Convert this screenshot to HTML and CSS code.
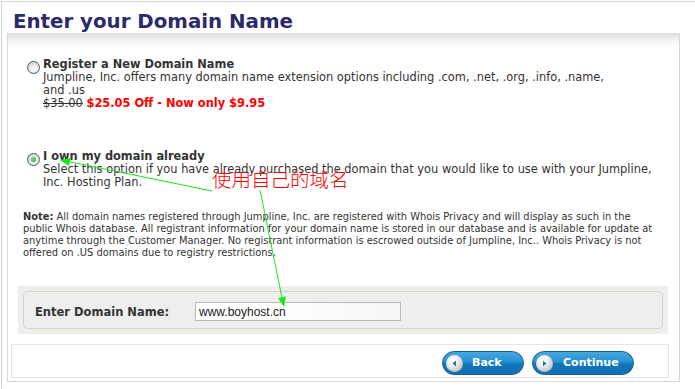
FILE: index.html
```html
<!DOCTYPE html>
<html>
<head>
<meta charset="utf-8">
<link rel="stylesheet" href="styles.css">
</head>
<body>
<div class="frame">
  <h1 class="title">Enter your Domain Name</h1>
  <div class="panel">
    <div class="option opt-new">
      <span class="radio"></span>
      <div class="opt-text">
        <div class="opt-title">Register a New Domain Name</div>
        <div>Jumpline, Inc. offers many domain name extension options including .com, .net, .org, .info, .name,<br>and .us</div>
        <div><s>$35.00</s> <b class="red">$25.05 Off - Now only $9.95</b></div>
      </div>
    </div>
    <div class="option opt-own">
      <span class="radio checked"></span>
      <div class="opt-text">
        <div class="opt-title">I own my domain already</div>
        <div>Select this option if you have already purchased the domain that you would like to use with your Jumpline,<br>Inc. Hosting Plan.</div>
      </div>
    </div>
    <p class="note"><b>Note:</b> All domain names registered through Jumpline, Inc. are registered with Whois Privacy and will display as such in the<br>public Whois database. All registrant information for your domain name is stored in our database and is available for update at<br>anytime through the Customer Manager. No registrant information is escrowed outside of Jumpline, Inc.. Whois Privacy is not<br>offered on .US domains due to registry restrictions.</p>
    <div class="domain-box">
      <div class="domain-inner">
        <label class="domain-label">Enter Domain Name:</label>
        <div class="domain-input">www.boyhost.cn</div>
      </div>
    </div>
    <div class="footer">
      <span class="btn btn-back"><span class="btn-icon"><svg width="9" height="9" viewBox="0 0 9 9"><path d="M6 1.5 L2.5 4.5 L6 7.5 Z" fill="#1f78b8"/></svg></span>Back</span>
      <span class="btn btn-continue"><span class="btn-icon"><svg width="9" height="9" viewBox="0 0 9 9"><path d="M3 1.5 L6.5 4.5 L3 7.5 Z" fill="#1f78b8"/></svg></span>Continue</span>
    </div>
  </div>
</div>
<div class="annot-text">使用自己的域名</div>
<svg class="annot" width="695" height="389" viewBox="0 0 695 389">
  <line x1="212" y1="191" x2="66" y2="161" stroke="#19e619" stroke-width="1"/>
  <polygon points="60,160 70.6,158.1 69,165.9" fill="#19e619"/>
  <line x1="260" y1="190" x2="282" y2="298" stroke="#19e619" stroke-width="1"/>
  <polygon points="284,307 285.9,296.4 278.1,298" fill="#19e619"/>
</svg>
</body>
</html>
```
FILE: styles.css
```css
html, body {
  margin: 0;
  padding: 0;
  background: #fff;
}
body {
  position: relative;
  width: 695px;
  height: 389px;
  overflow: hidden;
  font-family: "DejaVu Sans", Verdana, sans-serif;
  color: #333;
}
.frame {
  margin-top: 1px;
  margin-left: 1px;
  border-top: 1px solid #d4d4d4;
  border-left: 1px solid #d4d4d4;
  height: 400px;
}
.title {
  margin: 0;
  padding: 8px 0 0 11px;
  height: 23px;
  font-size: 19.8px;
  line-height: 24px;
  font-weight: bold;
  color: #2b2a6b;
}
.panel {
  margin-left: 5px;
  width: 671px;
  border-left: 1px solid #d8d8d8;
  border-right: 1px solid #d8d8d8;
  border-bottom: 1px solid #d8d8d8;
  background: linear-gradient(#dcdcdc 0px, #f4f4f4 8px, #fff 16px);
  padding-top: 25px;
  padding-bottom: 3px;
}
.option {
  display: flex;
  align-items: flex-start;
  padding-left: 19px;
  font-size: 11.4px;
  line-height: 13px;
}
.opt-own {
  margin-top: 40px;
}
.radio {
  width: 11px;
  height: 11px;
  border: 1px solid #3a5a80;
  border-radius: 50%;
  background: radial-gradient(circle at 60% 65%, #ffffff 0px, #f2f2ee 3px, #d6d6ce 7px);
  margin-top: 3px;
  margin-right: 3px;
  position: relative;
  flex: none;
}
.radio.checked::after {
  content: "";
  position: absolute;
  left: 3px;
  top: 3px;
  width: 5px;
  height: 5px;
  border-radius: 50%;
  background: radial-gradient(circle at 40% 40%, #7de07d, #21a121);
}
.opt-title {
  font-weight: bold;
}
.red {
  color: #ff0000;
}
s {
  color: #333;
}
.note {
  margin: 22px 0 0 15px;
  font-size: 9.9px;
  line-height: 12px;
}
.note b {
  font-weight: bold;
}
.domain-box {
  margin: 27px 0 0 10px;
  width: 640px;
  padding: 5px;
  background: #eeeeee;
}
.domain-inner {
  display: flex;
  align-items: center;
  height: 36px;
  border: 1px solid #d4d4c2;
  border-radius: 5px;
  padding: 0 11px;
  box-sizing: content-box;
}
.domain-label {
  width: 160px;
  font-size: 11.5px;
  font-weight: bold;
  color: #333;
  padding-top: 4px;
}
.domain-input {
  width: 201px;
  height: 17px;
  border: 1px solid #b9b9b9;
  margin-top: 3px;
  background: linear-gradient(90deg, #ffffff 40%, #f6f6f6);
  font-family: "Liberation Sans", Arial, sans-serif;
  font-size: 12px;
  line-height: 18px;
  padding-left: 3px;
  color: #222;
}
.footer {
  margin: 10px 10px 0 3px;
  height: 32px;
  border: 1px solid #e4e4e4;
  display: flex;
  justify-content: flex-end;
  align-items: flex-start;
  gap: 8px;
  padding-right: 34px;
}
.btn {
  margin-top: 6px;
  height: 22px;
  border: 1px solid #1b5e92;
  border-radius: 12px;
  background: linear-gradient(#45a8e0 0%, #2690d2 45%, #0f74b8 55%, #1172b3 100%);
  color: #fff;
  font-size: 11px;
  font-weight: bold;
  line-height: 20px;
  display: flex;
  align-items: center;
  box-sizing: content-box;
}
.btn-back {
  width: 80px;
}
.btn-continue {
  width: 100px;
}
.btn-icon {
  width: 17px;
  height: 17px;
  border-radius: 50%;
  background: radial-gradient(circle at 40% 35%, #ffffff 0px, #f0f0f0 5px, #c8c8c8 10px);
  margin-left: 3px;
  margin-right: 9px;
  display: flex;
  align-items: center;
  justify-content: center;
  flex: none;
}
.btn-continue .btn-icon {
  margin-right: 10px;
}
.annot-text {
  position: absolute;
  left: 212px;
  top: 166px;
  font-family: "Noto Sans CJK SC", sans-serif;
  font-weight: 300;
  font-size: 19.5px;
  line-height: 26px;
  color: #ff0000;
  white-space: nowrap;
}
.annot {
  position: absolute;
  left: 0;
  top: 0;
  pointer-events: none;
}
```
